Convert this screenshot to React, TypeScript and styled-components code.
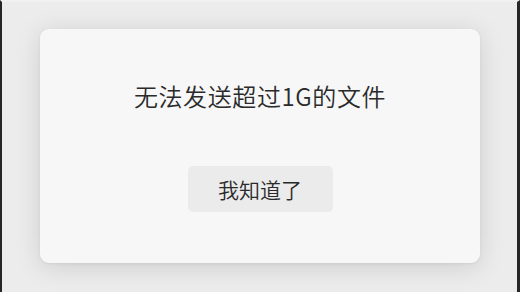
import React from "react";
import styled, { createGlobalStyle } from "styled-components";

const GlobalStyle = createGlobalStyle`
  html, body {
    margin: 0;
    padding: 0;
  }
  body {
    font-family: "Noto Sans CJK SC", "Noto Sans", sans-serif;
    background: #ececec;
  }
`;

const Screen = styled.div`
  box-sizing: border-box;
  width: 520px;
  height: 292px;
  display: flex;
  justify-content: flex-start;
  align-items: flex-start;
  padding: 27px 0 0 38px;
  background: #ececec;
  border-top: 2px solid #f1f1f1;
  border-left: 2px solid #262626;
  border-right: 3px solid #262626;
`;

const Dialog = styled.div`
  box-sizing: border-box;
  width: 440px;
  height: 234px;
  display: flex;
  flex-direction: column;
  align-items: center;
  padding-top: 51px;
  background: #f7f7f7;
  border-radius: 9px;
  box-shadow: 0 4px 26px rgba(0, 0, 0, 0.13), 0 1px 3px rgba(0, 0, 0, 0.06);
`;

const Message = styled.p`
  margin: 0;
  font-size: 24px;
  font-weight: 350;
  line-height: 32px;
  letter-spacing: 0.6px;
  color: #2a2a2a;
`;

const ConfirmButton = styled.button`
  box-sizing: border-box;
  margin-top: 54px;
  width: 145px;
  height: 46px;
  border: none;
  border-radius: 5px;
  background: #ebebeb;
  font-family: inherit;
  font-size: 21px;
  font-weight: 350;
  color: #2a2a2a;
  cursor: pointer;
`;

export default function App() {
  return (
    <>
      <GlobalStyle />
      <Screen>
        <Dialog>
          <Message>无法发送超过1G的文件</Message>
          <ConfirmButton>我知道了</ConfirmButton>
        </Dialog>
      </Screen>
    </>
  );
}
